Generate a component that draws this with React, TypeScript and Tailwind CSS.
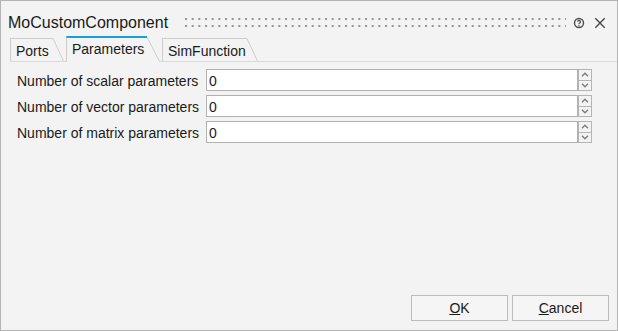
import React from "react";

function Chevron({ up }: { up: boolean }) {
  return (
    <svg width="8" height="5" viewBox="0 0 8 5">
      <path
        d={up ? "M1 4.2L4 1.2L7 4.2" : "M1 0.8L4 3.8L7 0.8"}
        fill="none"
        stroke="#7d7d7d"
        strokeWidth="1.4"
      />
    </svg>
  );
}

function InactiveTab({ label, w, ml }: { label: string; w: string; ml: string }) {
  return (
    <div className={`flex ${ml}`}>
      <div
        className={`h-[23px] ${w} border-l border-t border-[#cdcdcd] pl-[5px] pt-[4px] text-[14px] leading-[16px] whitespace-nowrap`}
      >
        {label}
      </div>
      <svg width="11" height="23" viewBox="0 0 11 23">
        <line x1="0" y1="0.5" x2="10.5" y2="23" stroke="#cdcdcd" strokeWidth="1" />
      </svg>
    </div>
  );
}

export default function App() {
  const rows = [
    "Number of scalar parameters",
    "Number of vector parameters",
    "Number of matrix parameters",
  ];
  return (
    <div className="w-[618px] h-[331px] bg-[#f3f3f3] border border-[#b4b4b4] flex flex-col text-[#1a1a1a] font-['Liberation_Sans',Arial,sans-serif] overflow-hidden">
      {/* Title bar */}
      <div className="h-[36px] flex items-start pl-[7px] pr-[11px] shrink-0">
        <span className="mt-[13px] text-[16px] leading-[18px] whitespace-nowrap">MoCustomComponent</span>
        <div className="flex-1 min-w-0 mt-[17px] ml-[17px] mr-[7px] h-[9px]">
          <svg className="w-full h-[9px]">
            <defs>
              <pattern id="grip" x="0" y="0" width="6.667" height="9" patternUnits="userSpaceOnUse">
                <rect x="0" y="0" width="2" height="2" fill="#949494" />
                <rect x="0" y="7" width="2" height="2" fill="#949494" />
              </pattern>
            </defs>
            <rect x="0" y="0" width="100%" height="9" fill="url(#grip)" />
          </svg>
        </div>
        <svg className="mt-[16px] w-[12px] h-[12px]" viewBox="0 0 12 12">
          <circle cx="6" cy="6" r="4.5" fill="none" stroke="#4d4d4d" strokeWidth="1.4" />
          <path
            d="M4.6 4.8a1.4 1.4 0 1 1 2.05 1.25c-.45.25-.65.5-.65.95v.3"
            fill="none"
            stroke="#4d4d4d"
            strokeWidth="1.25"
          />
          <circle cx="6" cy="8.75" r="0.7" fill="#4d4d4d" />
        </svg>
        <svg className="mt-[16px] ml-[9px] w-[12px] h-[12px]" viewBox="0 0 12 12">
          <path d="M1.3 1.3L10.7 10.7M10.7 1.3L1.3 10.7" stroke="#4a4a4a" strokeWidth="1.4" />
        </svg>
      </div>

      {/* Tabs */}
      <div className="h-[25px] ml-[9px] flex items-end border-b border-[#dadada] shrink-0">
        <InactiveTab label="Ports" w="w-[43px]" ml="" />
        <div className="flex -mb-px relative z-10 ml-[2px]">
          <div className="h-[26px] w-[81px] border-l border-l-[#cdcdcd] border-t-2 border-t-[#19a0dc] bg-[#f3f3f3] pl-[5px] pt-[3px] text-[14px] leading-[16px] whitespace-nowrap">
            Parameters
          </div>
          <svg width="13" height="26" viewBox="0 0 13 26">
            <polygon points="0,0 12.5,25 13,26 0,26" fill="#f3f3f3" />
            <line x1="0" y1="1" x2="12.5" y2="25.5" stroke="#cdcdcd" strokeWidth="1" />
          </svg>
        </div>
        <InactiveTab label="SimFunction" w="w-[85px]" ml="ml-[2px]" />
        <div className="flex-1" />
      </div>

      {/* Content */}
      <div className="flex-1 pl-[16px] pr-[25px] pt-[7px] flex flex-col gap-[4px]">
        {rows.map((r) => (
          <div key={r} className="flex items-start h-[22px]">
            <div className="w-[189px] mt-[4px] text-[14px] leading-[16px] whitespace-nowrap">{r}</div>
            <div className="flex-1 h-[22px] border border-[#b1b1b1] bg-white pl-[2px] pt-[3px] text-[14px] leading-[16px]">
              0
            </div>
            <div className="w-[14px] h-[22px] flex flex-col">
              <div className="h-[12px] border border-[#b4b4b4] flex items-center justify-center">
                <Chevron up={true} />
              </div>
              <div className="h-[11px] border-x border-b border-[#b4b4b4] flex items-center justify-center">
                <Chevron up={false} />
              </div>
            </div>
          </div>
        ))}
      </div>

      {/* Buttons */}
      <div className="flex justify-end gap-[4px] pr-[8px] pb-[9px] shrink-0">
        <button className="w-[97px] h-[26px] border border-[#bcbcbc] bg-[#f5f5f5] text-[14px] leading-[16px] text-[#1a1a1a]">
          <u>O</u>K
        </button>
        <button className="w-[97px] h-[26px] border border-[#bcbcbc] bg-[#f5f5f5] text-[14px] leading-[16px] text-[#1a1a1a]">
          <u>C</u>ancel
        </button>
      </div>
    </div>
  );
}
